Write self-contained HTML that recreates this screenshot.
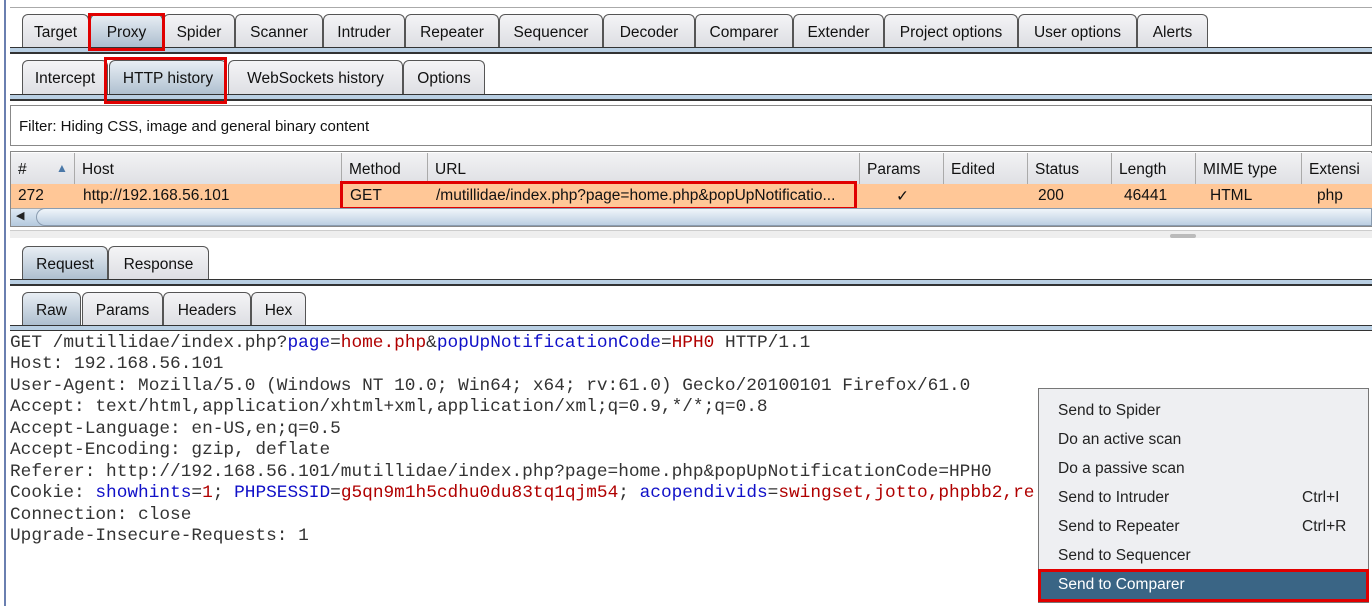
<!DOCTYPE html>
<html><head><style>
*{margin:0;padding:0;box-sizing:border-box}
body{width:1372px;height:606px;background:#fff;position:relative;overflow:hidden;font-family:"Liberation Sans",sans-serif;font-size:15px;color:#111}
.a{position:absolute}
.tab{position:absolute;border:1px solid #555;border-bottom:none;border-radius:6px 6px 0 0;background:linear-gradient(#f4f4f6,#dcdde2);text-align:center;font-size:15.5px;color:#111}
.tab.sel{background:linear-gradient(#e8eef4,#aabccd)}
.line{position:absolute;left:10px;right:0;border-top:1px solid #333;border-bottom:2px solid #333;background:#b9cfe3}
.red{position:absolute;border:3px solid #e00000}
.th{position:absolute;top:153px;height:31px;border-right:1px solid #aaa;padding:8px 0 0 7px;font-size:15.5px;background:linear-gradient(#f2f2f4,#dfe0e4)}
.td{position:absolute;top:187px;font-size:15.5px}
.mono{position:absolute;left:10px;font-family:"Liberation Mono",monospace;font-size:17.8px;color:#333;white-space:pre;line-height:21.44px}
.b{color:#1010c8}.r{color:#b00000}
.mi{position:absolute;left:1058px;font-size:15.5px;color:#222}
.sc{position:absolute;left:1302px;font-size:15.5px;color:#222}
</style></head><body>
<div class="a" style="left:4px;top:0;width:2px;height:606px;background:#6a7fb0"></div>
<div class="a" style="left:10px;top:7px;right:0;height:1px;background:#aaa"></div>

<div class="tab" style="left:22px;top:14px;width:67px;height:34px;padding-top:9px">Target</div>
<div class="tab sel" style="left:90px;top:14px;width:73px;height:34px;padding-top:9px">Proxy</div>
<div class="tab" style="left:163px;top:14px;width:72px;height:34px;padding-top:9px">Spider</div>
<div class="tab" style="left:235px;top:14px;width:88px;height:34px;padding-top:9px">Scanner</div>
<div class="tab" style="left:323px;top:14px;width:82px;height:34px;padding-top:9px">Intruder</div>
<div class="tab" style="left:405px;top:14px;width:94px;height:34px;padding-top:9px">Repeater</div>
<div class="tab" style="left:499px;top:14px;width:104px;height:34px;padding-top:9px">Sequencer</div>
<div class="tab" style="left:603px;top:14px;width:92px;height:34px;padding-top:9px">Decoder</div>
<div class="tab" style="left:695px;top:14px;width:98px;height:34px;padding-top:9px">Comparer</div>
<div class="tab" style="left:793px;top:14px;width:91px;height:34px;padding-top:9px">Extender</div>
<div class="tab" style="left:884px;top:14px;width:134px;height:34px;padding-top:9px">Project options</div>
<div class="tab" style="left:1018px;top:14px;width:119px;height:34px;padding-top:9px">User options</div>
<div class="tab" style="left:1137px;top:14px;width:71px;height:34px;padding-top:9px">Alerts</div>
<div class="line" style="top:47px;height:7px"></div>
<div class="red" style="left:88px;top:13px;width:77px;height:38px"></div>

<div class="tab" style="left:22px;top:60px;width:86px;height:37px;padding-top:9px">Intercept</div>
<div class="tab sel" style="left:109px;top:60px;width:118px;height:37px;padding-top:9px">HTTP history</div>
<div class="tab" style="left:228px;top:60px;width:175px;height:37px;padding-top:9px">WebSockets history</div>
<div class="tab" style="left:403px;top:60px;width:82px;height:37px;padding-top:9px">Options</div>
<div class="line" style="top:94px;height:7px"></div>
<div class="red" style="left:104px;top:57px;width:123px;height:47px"></div>

<div class="a" style="left:10px;top:105px;right:0;height:41px;border:1px solid #888;background:#fff;padding:12px 0 0 8px;font-size:15px">Filter: Hiding CSS, image and general binary content</div>
<div class="a" style="left:10px;top:151px;right:0;height:76px;border:1px solid #888;background:#fff"></div>

<div class="th" style="left:11px;width:64px">#<span style="position:absolute;left:45px;top:8px;color:#4a78a8;font-size:12px">▲</span></div>
<div class="th" style="left:75px;width:267px">Host</div>
<div class="th" style="left:342px;width:86px">Method</div>
<div class="th" style="left:428px;width:432px">URL</div>
<div class="th" style="left:860px;width:84px">Params</div>
<div class="th" style="left:944px;width:84px">Edited</div>
<div class="th" style="left:1028px;width:84px">Status</div>
<div class="th" style="left:1112px;width:84px">Length</div>
<div class="th" style="left:1196px;width:106px">MIME type</div>
<div class="th" style="left:1302px;width:80px;border-right:none">Extensi</div>

<div class="a" style="left:11px;top:184px;right:0;height:24px;background:#ffc797"></div>
<div class="td" style="left:18px">272</div>
<div class="td" style="left:83px">http://192.168.56.101</div>
<div class="td" style="left:350px">GET</div>
<div class="td" style="left:436px">/mutillidae/index.php?page=home.php&amp;popUpNotificatio...</div>
<div class="td" style="left:896px">✓</div>
<div class="td" style="left:1038px">200</div>
<div class="td" style="left:1124px">46441</div>
<div class="td" style="left:1210px">HTML</div>
<div class="td" style="left:1317px">php</div>
<div class="red" style="left:340px;top:181px;width:517px;height:29px"></div>

<div class="a" style="left:11px;top:208px;right:0;height:18px;background:linear-gradient(#e0eaf4,#b4c9de);border-top:1px solid #aaa"></div>
<div class="a" style="left:36px;top:208px;right:0;height:18px;border:1px solid #8a9cb0;border-radius:14px 0 0 14px;background:linear-gradient(#f0f5fa,#bccfe2)"></div>
<div class="a" style="left:16px;top:209px;font-size:11px;color:#222">◀</div>
<div class="a" style="left:10px;top:230px;right:0;height:8px;background:#eee;border-top:1px solid #ccc"></div>
<div class="a" style="left:1170px;top:234px;width:26px;height:4px;background:#bbb;border-radius:2px"></div>

<div class="tab sel" style="left:22px;top:246px;width:86px;height:35px;padding-top:9px">Request</div>
<div class="tab" style="left:108px;top:246px;width:101px;height:35px;padding-top:9px">Response</div>
<div class="line" style="top:279px;height:7px"></div>

<div class="tab sel" style="left:22px;top:292px;width:59px;height:35px;padding-top:9px">Raw</div>
<div class="tab" style="left:82px;top:292px;width:81px;height:35px;padding-top:9px">Params</div>
<div class="tab" style="left:163px;top:292px;width:88px;height:35px;padding-top:9px">Headers</div>
<div class="tab" style="left:251px;top:292px;width:55px;height:35px;padding-top:9px">Hex</div>
<div class="line" style="top:325px;height:6px;border-bottom:1px solid #333"></div>

<div class="mono" style="top:333px">GET /mutillidae/index.php?<span class="b">page</span>=<span class="r">home.php</span>&amp;<span class="b">popUpNotificationCode</span>=<span class="r">HPH0</span> HTTP/1.1
Host: 192.168.56.101
User-Agent: Mozilla/5.0 (Windows NT 10.0; Win64; x64; rv:61.0) Gecko/20100101 Firefox/61.0
Accept: text/html,application/xhtml+xml,application/xml;q=0.9,*/*;q=0.8
Accept-Language: en-US,en;q=0.5
Accept-Encoding: gzip, deflate
Referer: http://192.168.56.101/mutillidae/index.php?page=home.php&amp;popUpNotificationCode=HPH0
Cookie: <span class="b">showhints</span>=<span class="r">1</span>; <span class="b">PHPSESSID</span>=<span class="r">g5qn9m1h5cdhu0du83tq1qjm54</span>; <span class="b">acopendivids</span>=<span class="r">swingset,jotto,phpbb2,re</span>
Connection: close
Upgrade-Insecure-Requests: 1</div>

<div class="a" style="left:1038px;top:388px;width:331px;height:215px;background:#eeeff2;border:1px solid #777"></div>
<div class="mi" style="top:402px">Send to Spider</div>
<div class="mi" style="top:431px">Do an active scan</div>
<div class="mi" style="top:460px">Do a passive scan</div>
<div class="mi" style="top:489px">Send to Intruder</div><div class="sc" style="top:489px">Ctrl+I</div>
<div class="mi" style="top:518px">Send to Repeater</div><div class="sc" style="top:518px">Ctrl+R</div>
<div class="mi" style="top:547px">Send to Sequencer</div>
<div class="a" style="left:1038px;top:569px;width:331px;height:33px;background:#3a6585;border:3px solid #e00000"></div>
<div class="mi" style="top:576px;color:#fff">Send to Comparer</div>
</body></html>
